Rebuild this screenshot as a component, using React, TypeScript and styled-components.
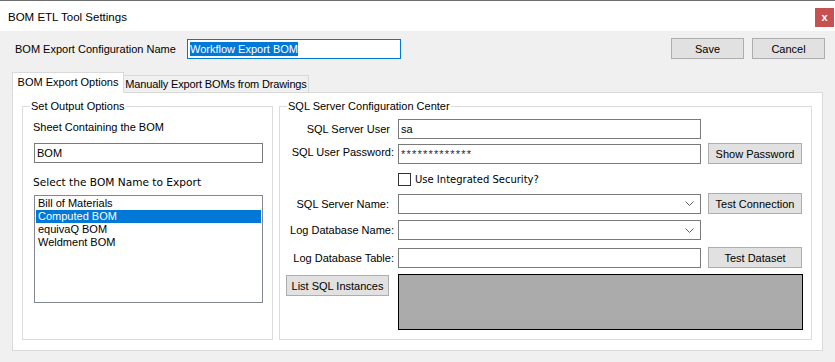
import React from "react";
import styled, { createGlobalStyle } from "styled-components";

const GlobalStyle = createGlobalStyle`
  html, body {
    margin: 0;
    padding: 0;
    background: #f0f0f0;
  }

  body {
    color: #000;
    font-family: "Liberation Sans", Arial, sans-serif;
    font-size: 11px;
  }

  * {
    box-sizing: border-box;
  }
`;

const Window = styled.div`
  background: #f0f0f0;
  border-top: 1px solid #6e6e6e;
  display: flex;
  flex-direction: column;
  height: 362px;
  overflow: hidden;
  width: 835px;
`;

const TitleBar = styled.header`
  align-items: flex-start;
  background: #fff;
  display: flex;
  height: 30px;
  justify-content: space-between;
  padding: 0 1px 0 8px;
`;

const Title = styled.span`
  font-size: 11.5px;
  line-height: 14px;
  margin-top: 9px;
`;

const CloseButton = styled.button`
  align-items: center;
  background: #c75050;
  border: none;
  color: #fff;
  display: flex;
  font-family: "Liberation Sans", Arial, sans-serif;
  font-size: 11px;
  font-weight: bold;
  height: 19px;
  justify-content: center;
  margin-top: 7px;
  padding: 0 0 2px;
  width: 19px;
`;

const Body = styled.main`
  display: flex;
  flex: 1;
  flex-direction: column;
  padding: 7px 12px 0;
`;

const HeaderRow = styled.div`
  align-items: center;
  display: flex;
  gap: 8px;
  height: 21px;
  margin-right: -2px;
`;

const HeaderLabel = styled.label`
  padding-left: 3px;
  width: 167px;
`;

const Spacer = styled.div`
  flex: 1;
`;

const TextBox = styled.div<{ $width?: number; $focused?: boolean }>`
  align-items: center;
  background: #fff;
  border: 1px solid ${(p) => (p.$focused ? "#0078d7" : "#7a7a7a")};
  display: flex;
  height: 20px;
  overflow: hidden;
  padding: 0 2px;
  white-space: nowrap;
  width: ${(p) => (p.$width ? `${p.$width}px` : "auto")};
`;

const Selection = styled.span`
  background: #0078d7;
  color: #fff;
  line-height: 14px;
`;

const Masked = styled.span`
  color: #1c2a44;
  letter-spacing: 1.2px;
`;

const Button = styled.button<{ $width?: number }>`
  background: #e1e1e1;
  border: 1px solid #adadad;
  color: #000;
  font-family: "Liberation Sans", Arial, sans-serif;
  font-size: 11px;
  height: 21px;
  padding: 0;
  width: ${(p) => (p.$width ? `${p.$width}px` : "100%")};
`;

const TabStrip = styled.div`
  align-items: flex-end;
  display: flex;
  height: 21px;
  margin-bottom: -1px;
  margin-top: 13px;
  position: relative;
  z-index: 1;
`;

const Tab = styled.div<{ $active?: boolean; $width: number }>`
  background: ${(p) => (p.$active ? "#fff" : "#f0f0f0")};
  border: 1px solid #d9d9d9;
  border-bottom: ${(p) => (p.$active ? "1px solid #fff" : "none")};
  border-left: ${(p) => (p.$active ? "1px solid #d9d9d9" : "none")};
  height: ${(p) => (p.$active ? 21 : 17)}px;
  letter-spacing: ${(p) => (p.$active ? 0 : -0.15)}px;
  line-height: ${(p) => (p.$active ? 18 : 16)}px;
  margin-bottom: ${(p) => (p.$active ? 0 : 1)}px;
  overflow: hidden;
  text-align: center;
  white-space: nowrap;
  width: ${(p) => p.$width}px;
`;

const Panel = styled.section`
  background: #fff;
  border: 1px solid #d9d9d9;
  display: flex;
  gap: 6px;
  height: 259px;
  padding: 7px 10px 10px 9px;
`;

const Group = styled.fieldset<{ $width: number }>`
  border: 1px solid #dcdcdc;
  display: flex;
  flex-direction: column;
  margin: 0;
  min-width: 0;
  padding: 0;
  width: ${(p) => p.$width}px;
`;

const Legend = styled.legend`
  line-height: 13px;
  margin-left: 7px;
  padding: 0 1px;
`;

const Caption = styled.div<{ $top: number; $wide?: boolean }>`
  font-family: ${(p) =>
    p.$wide ? '"DejaVu Sans", Verdana, sans-serif' : '"Liberation Sans", Arial, sans-serif'};
  font-size: ${(p) => (p.$wide ? "10.6px" : "11px")};
  line-height: 13px;
  margin-top: ${(p) => p.$top}px;
  white-space: nowrap;
`;

const LeftContent = styled.div`
  display: flex;
  flex-direction: column;
  padding: 0 9px 0 10px;
`;

const SheetBox = styled(TextBox)`
  margin: 9px 0 0 1px;
`;

const ListBox = styled.ul`
  background: #fff;
  border: 1px solid #828790;
  height: 108px;
  list-style: none;
  margin: 6px 0 0 1px;
  padding: 1px;
`;

const ListItem = styled.li<{ $selected?: boolean }>`
  background: ${(p) => (p.$selected ? "#0078d7" : "transparent")};
  color: ${(p) => (p.$selected ? "#fff" : "#000")};
  height: 13px;
  line-height: 13px;
  padding-left: 2px;
`;

const SqlContent = styled.div`
  display: flex;
  flex-direction: column;
  padding: 0 8px 0 0;
`;

const FieldRow = styled.div<{ $top: number; $height?: number }>`
  align-items: center;
  display: grid;
  column-gap: 4px;
  grid-template-columns: 114px 303px 101px;
  height: ${(p) => p.$height ?? 20}px;
  margin-top: ${(p) => p.$top}px;
`;

const FieldLabel = styled.label<{ $inset?: number; $raise?: number }>`
  padding-bottom: ${(p) => p.$raise ?? 0}px;
  padding-right: ${(p) => p.$inset ?? 0}px;
  text-align: right;
  white-space: nowrap;
`;

const RowButton = styled(Button)`
  align-self: end;
  justify-self: start;
  margin-left: 3px;
  width: 94px;
`;

const ComboBox = styled(TextBox)`
  justify-content: flex-end;
  padding-right: 6px;
`;

const CheckRow = styled.label`
  align-items: center;
  display: flex;
  font-family: "DejaVu Sans", Verdana, sans-serif;
  font-size: 10px;
  gap: 4px;
  grid-column: 2 / 4;
  white-space: nowrap;
`;

const CheckBox = styled.span`
  background: #fff;
  border: 1px solid #333;
  height: 13px;
  width: 13px;
`;

const StatusBox = styled.div`
  align-self: stretch;
  background: #ababab;
  border: 1px solid #000;
  grid-column: 2 / 4;
  width: 405px;
`;

const ListButton = styled(Button)`
  align-self: start;
  margin: 1px 0 0 6px;
  width: 103px;
`;

const Chevron = () => (
  <svg width="9" height="5" viewBox="0 0 9 5">
    <polyline points="0.5,0.5 4.5,4.5 8.5,0.5" fill="none" stroke="#606060" strokeWidth="1" />
  </svg>
);

const boms = ["Bill of Materials", "Computed BOM", "equivaQ BOM", "Weldment BOM"];

const App: React.FC = () => {
  return (
    <>
      <GlobalStyle />
      <Window>
        <TitleBar>
          <Title>BOM ETL Tool Settings</Title>
          <CloseButton>x</CloseButton>
        </TitleBar>
        <Body>
          <HeaderRow>
            <HeaderLabel>BOM Export Configuration Name</HeaderLabel>
            <TextBox $width={214} $focused>
              <Selection>Workflow Export BOM</Selection>
            </TextBox>
            <Spacer />
            <Button $width={73}>Save</Button>
            <Button $width={73}>Cancel</Button>
          </HeaderRow>

          <TabStrip>
            <Tab $active $width={112}>BOM Export Options</Tab>
            <Tab $width={185}>Manually Export BOMs from Drawings</Tab>
          </TabStrip>

          <Panel>
            <Group $width={251}>
              <Legend>Set Output Options</Legend>
              <LeftContent>
                <Caption $top={8}>Sheet Containing the BOM</Caption>
                <SheetBox>BOM</SheetBox>
                <Caption $top={13} $wide>
                  Select the BOM Name to Export
                </Caption>
                <ListBox>
                  {boms.map((b) => (
                    <ListItem key={b} $selected={b === "Computed BOM"}>
                      {b}
                    </ListItem>
                  ))}
                </ListBox>
              </LeftContent>
            </Group>

            <Group $width={533}>
              <Legend>SQL Server Configuration Center</Legend>
              <SqlContent>
                <FieldRow $top={6}>
                  <FieldLabel $inset={4}>SQL Server User</FieldLabel>
                  <TextBox>sa</TextBox>
                </FieldRow>
                <FieldRow $top={4}>
                  <FieldLabel $raise={4}>SQL User Password:</FieldLabel>
                  <TextBox>
                    <Masked>*************</Masked>
                  </TextBox>
                  <RowButton>Show Password</RowButton>
                </FieldRow>
                <FieldRow $top={10} $height={13}>
                  <span />
                  <CheckRow>
                    <CheckBox />
                    Use Integrated Security?
                  </CheckRow>
                </FieldRow>
                <FieldRow $top={7}>
                  <FieldLabel $inset={5}>SQL Server Name:</FieldLabel>
                  <ComboBox>
                    <Chevron />
                  </ComboBox>
                  <RowButton>Test Connection</RowButton>
                </FieldRow>
                <FieldRow $top={7}>
                  <FieldLabel>Log Database Name:</FieldLabel>
                  <ComboBox>
                    <Chevron />
                  </ComboBox>
                </FieldRow>
                <FieldRow $top={7}>
                  <FieldLabel>Log Database Table:</FieldLabel>
                  <TextBox />
                  <RowButton>Test Dataset</RowButton>
                </FieldRow>
                <FieldRow $top={7} $height={56}>
                  <ListButton>List SQL Instances</ListButton>
                  <StatusBox />
                </FieldRow>
              </SqlContent>
            </Group>
          </Panel>
        </Body>
      </Window>
    </>
  );
};

export default App;
